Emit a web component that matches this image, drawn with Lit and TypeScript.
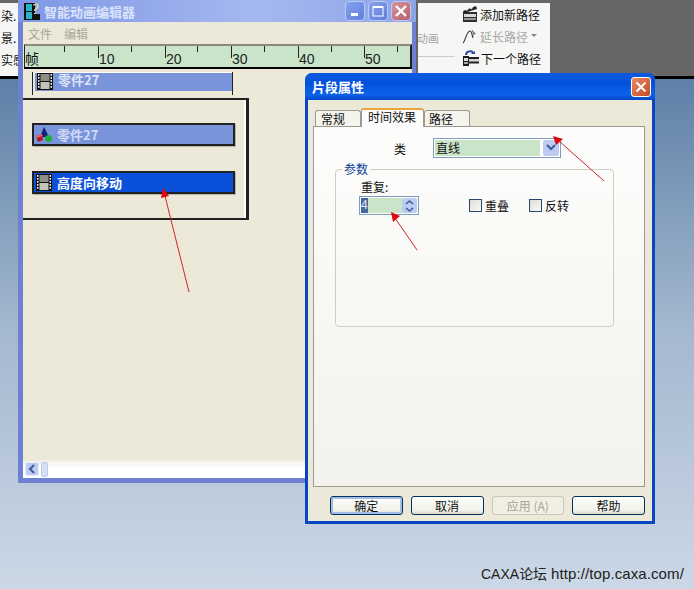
import { LitElement, html, css, svg } from "lit";
import { customElement } from "lit/decorators.js";

const film = html`<svg class="film" width="16" height="17" viewBox="0 0 16 17">
  <rect width="16" height="17" fill="#111"/>
  <rect x="3.5" y="1" width="9" height="7" fill="#8d8d86"/><rect x="3.5" y="9" width="9" height="7" fill="#c4c4bc"/>
  ${[1, 4, 7, 10, 13].map((y) => svg`<rect x="1" y="${y}" width="1.5" height="1.8" fill="#eee"/><rect x="13.5" y="${y}" width="1.5" height="1.8" fill="#eee"/>`)}
</svg>`;

const ticks = [
  { x: 40, h: 6 }, { x: 74, h: 12, l: "10" }, { x: 107, h: 6 }, { x: 141, h: 12, l: "20" }, { x: 173, h: 6 },
  { x: 207, h: 12, l: "30" }, { x: 240, h: 6 }, { x: 274, h: 12, l: "40" }, { x: 307, h: 6 }, { x: 340, h: 12, l: "50" }, { x: 373, h: 6 },
];

@customElement("app-root")
export class AppRoot extends LitElement {
  static styles = css`
    :host { display: block; position: relative; width: 694px; height: 589px; overflow: hidden;
      background: linear-gradient(180deg, #55789f 0%, #5b7ea6 12%, #a3b7ce 55%, #ccd8e6 100%);
      font-family: "Noto Sans CJK SC", "Liberation Sans", sans-serif; font-size: 12px; color: #111; }
    .backdrop { position: absolute; left: 0; top: 0; width: 694px; height: 79px; background: #666; border-bottom: 3px solid #000; box-sizing: border-box; }
    .side { position: absolute; left: 0; top: 3px; width: 18px; height: 73px; background: #f6f6f4; display: flex; flex-direction: column; gap: 4px; padding: 4px 0 0 1px; box-sizing: border-box; line-height: 18px; white-space: nowrap; }
    .tools { position: absolute; left: 418px; top: 3px; width: 132px; height: 73px; background: #f6f6f4; }
    .tools .old { position: absolute; left: -1px; top: 26px; color: #a4a4a4; line-height: 18px; font-size: 11px; white-space: nowrap; }
    .tools .rule { position: absolute; left: 0; top: 53px; width: 37px; height: 1px; background: #ccc; }
    .tl { position: absolute; left: 45px; display: flex; align-items: center; gap: 3px; height: 20px; white-space: nowrap; }
    .tl.dis { color: #a8a8a8; }
    .tl svg { flex: none; }

    .main { position: absolute; left: 18px; top: 0; width: 398px; height: 483px; box-sizing: border-box; display: flex; flex-direction: column; background: #6d80d2; padding: 0 4px 5px 5px; }
    .main .title { height: 22px; margin: 0 -4px 0 -5px; padding: 0 0 0 5px; display: flex; align-items: center; gap: 4px; background: linear-gradient(90deg, #7e97e6, #a6b8f0 60%, #8ea4e6); color: #dbe3fb; font-weight: 700; font-size: 13px; }
    .caps { margin-left: auto; margin-right: 5px; display: flex; gap: 3px; }
    .cap { width: 20px; height: 20px; border: 1px solid #b9c8f4; border-radius: 4px; box-sizing: border-box; background: linear-gradient(135deg, #87a2ee, #5f7fdc); display: flex; align-items: center; justify-content: center; }
    .cap.close { background: linear-gradient(135deg, #d9939a, #b9606c); }
    .body { flex: 1; background: #ece9d8; display: flex; flex-direction: column; min-height: 0; }
    .menu { height: 22px; display: flex; gap: 12px; align-items: center; padding-left: 5px; color: #a9a79b; flex: none; }
    .ruler { flex: none; position: relative; margin-left: 1px; width: 388px; height: 25px; box-sizing: border-box; background: #c9e4c8; border-top: 2px solid #8a8a80; border-bottom: 2px solid #000; border-left: 1px solid #222; border-right: 2px solid #222; }
    .ruler .tick { position: absolute; top: 0; width: 1px; background: #222; }
    .ruler .num { position: absolute; top: 5px; font-family: "Liberation Sans", sans-serif; font-size: 14px; line-height: 16px; color: #222; }
    .ruler .zhen { position: absolute; left: 0; top: 3px; font-size: 14px; line-height: 18px; }
    .tab { flex: none; margin: 3px 0 0 9px; width: 201px; height: 23px; box-sizing: border-box; border-left: 1px solid #222; border-right: 1px solid #222; padding: 0 0 0 2px; background: #ece9d8; }
    .tab > div { height: 18px; border-top: 1px solid #fff; background: #7a94db; display: flex; align-items: flex-start; gap: 5px; padding-left: 2px; color: #dbe3f7; font-weight: 700; font-size: 13px; line-height: 14px; }
    .panel { flex: none; margin-top: 3px; width: 226px; height: 122px; box-sizing: border-box; border-top: 2px solid #222; border-right: 3px solid #222; border-bottom: 2px solid #222; box-shadow: inset -2px 0 #fff; padding: 23px 0 0 9px; display: flex; flex-direction: column; gap: 25px; }
    .row { width: 203px; height: 23px; flex: none; box-sizing: border-box; border: 2px solid #222; box-shadow: 1px 1px #b5b5aa; display: flex; align-items: center; gap: 5px; padding-left: 2px; font-weight: 700; font-size: 13px; background: #7a94db; color: #cfdaf5; }
    .row.sel { background: #0a50d8; color: #fff; }
    .spacer { flex: 1; }
    .scroll { flex: none; height: 18px; background: linear-gradient(180deg, #f1efe4, #fff 45%, #fff); display: flex; align-items: center; gap: 2px; padding-left: 2px; }
    .sbtn { width: 14px; height: 14px; border: 1px solid #e8eefb; border-radius: 2px; background: #bccbef; display: flex; align-items: center; justify-content: center; box-sizing: border-box; }
    .thumb { width: 7px; height: 15px; box-sizing: border-box; border: 1px solid #bcc9ec; border-radius: 2px; background: #d5dff6; }

    .dlg { position: absolute; left: 305px; top: 73px; width: 350px; height: 451px; box-sizing: border-box; display: flex; flex-direction: column; background: #0a45c4; border-radius: 7px 7px 0 0; padding: 0 3px 3px; }
    .dlg .title { flex: none; height: 27px; margin: 0 -3px; padding: 0 4px 0 7px; display: flex; align-items: center; justify-content: space-between; border-radius: 7px 7px 0 0; background: linear-gradient(180deg, #0a5ae0, #0451dc 40%, #0a63ea 80%, #0645c8); color: #fff; font-weight: 700; font-size: 13px; }
    .x { width: 20px; height: 20px; box-sizing: border-box; border: 1px solid #fff; border-radius: 3px; background: linear-gradient(135deg, #e28a68, #c84a26); display: flex; align-items: center; justify-content: center; }
    .dbody { flex: 1; background: #ece9d8; padding: 8px 7px 0 5px; display: flex; flex-direction: column; min-height: 0; }
    .tabs { flex: none; height: 18px; display: flex; align-items: flex-end; padding-left: 2px; position: relative; z-index: 1; }
    .t { box-sizing: border-box; height: 16px; width: 46px; border: 1px solid #9a9a90; border-bottom: 0; border-radius: 3px 3px 0 0; background: #f4f3ec; padding-left: 5px; line-height: 16px; }
    .t.on { height: 19px; width: 63px; background: #fcfcfb; border-top: 2px solid #e8a53c; padding-left: 6px; line-height: 14px; margin-bottom: -1px; border-bottom: 0; }
    .t.last { margin-left: 0; padding-left: 4px; }
    .page { flex: none; height: 361px; box-sizing: border-box; border: 1px solid #9a9a90; background: linear-gradient(180deg, #fdfdfc, #f3f2ec); display: flex; flex-direction: column; }
    .klass { display: flex; align-items: center; margin-top: 10px; padding-left: 80px; gap: 27px; height: 22px; flex: none; }
    .combo { width: 128px; height: 20px; box-sizing: border-box; border: 1px solid #7f9db9; background: #fff; display: flex; padding: 1px; gap: 3px; align-items: stretch; }
    .combo .val { flex: 1; background: #c9e4c8; line-height: 16px; padding-left: 1px; }
    .combo .arr { width: 16px; background: #bccbf2; border-radius: 2px; display: flex; align-items: center; justify-content: center; }
    fieldset { margin: 10px 0 0 21px; width: 279px; height: 158px; box-sizing: border-box; border: 1px solid #cfcdbf; border-radius: 4px; padding: 0 0 0 25px; position: relative; }
    legend { color: #0a3f9a; padding: 0 2px; margin-left: 6px; font-size: 12px; line-height: 12px; position: absolute; top: -7px; left: 0; background: #fbfbf9; }
    .lbl { margin-top: 8px; line-height: 18px; }
    .ctl { display: flex; align-items: center; margin-left: -2px; }
    .spin { width: 60px; height: 19px; box-sizing: border-box; border: 1px solid #7f9db9; display: flex; padding: 1px; }
    .spin .v { flex: 1; background: #c9e4c8; }
    .spin .v span { display: block; width: 7px; height: 15px; background: #44679a; color: #e8eef8; line-height: 15px; font-size: 12px; font-family: "Liberation Sans", sans-serif; }
    .spin .ud { width: 15px; background: #bccbf2; border-radius: 2px; display: flex; align-items: center; justify-content: center; }
    .chk { display: flex; align-items: center; gap: 3px; margin-left: 50px; }
    .chk + .chk { margin-left: 20px; }
    .box { width: 13px; height: 13px; box-sizing: border-box; border: 1px solid #26476e; background: linear-gradient(135deg, #dcdcd3, #fbfbf8); }
    .btns { display: flex; gap: 8px; margin-top: 9px; padding-left: 17px; flex: none; }
    .btn { width: 73px; height: 19px; box-sizing: border-box; border: 1px solid #00305c; border-radius: 3px; background: linear-gradient(180deg, #fff, #f1f0e8 80%, #d9d6c8); text-align: center; line-height: 17px; font-size: 12px; }
    .btn.def { box-shadow: inset 0 0 0 2px #a5bde6; }
    .btn.dis { border-color: #c9c7ba; color: #a5a397; background: #f1efe4; }

    .foot { position: absolute; left: 481px; top: 564px; line-height: 18px; font-family: "Liberation Sans", "Noto Sans CJK SC", sans-serif; font-size: 14px; color: #222; white-space: nowrap; }
    .foot b { font-family: "Noto Sans CJK SC", sans-serif; font-weight: 400; }
    .foot i { font-style: normal; font-size: 15px; letter-spacing: 0.1px; }
    .arrows { position: absolute; left: 0; top: 0; pointer-events: none; }
  `;

  render() {
    return html`
      <div class="backdrop"></div>
      <div class="side"><div>染.</div><div>景.</div><div>实感</div></div>
      <div class="tools">
        <div class="old">动画</div><div class="rule"></div>
        <div class="tl" style="top:1px">
          <svg width="14" height="16" viewBox="0 0 14 16"><rect x="0" y="6" width="14" height="10" fill="#2d2d2d"/><rect x="1" y="8" width="12" height="3" fill="#d8d8d8"/><rect x="1" y="12" width="12" height="2" fill="#9a9a9a"/><path d="M0 5 13 0l1 3-13 4z" fill="#222"/><path d="M3 4.600 5 2.800M7.500 3 9.500 1.200" stroke="#eee" stroke-width="1.400"/></svg>
          <span>添加新路径</span></div>
        <div class="tl dis" style="top:23px">
          <svg width="14" height="16" viewBox="0 0 14 16"><path d="M0 15C2.500 13 3.500 3 7 3c2 0 2 5 3 7" fill="none" stroke="#333" stroke-width="1.100"/><path d="M8.500 1 13 6l-2 .5 0 2.500z" fill="#777"/></svg>
          <span>延长路径</span>
          <svg width="6" height="4" viewBox="0 0 6 4"><path d="M0 0h6L3 3z" fill="#888"/></svg></div>
        <div class="tl" style="top:45px">
          <svg width="16" height="16" viewBox="0 0 16 16"><rect x="0" y="6" width="6" height="10" fill="#1c1c1c"/><rect x="1" y="8" width="4" height="3" fill="#ddd"/><rect x="1" y="12" width="4" height="2" fill="#aaa"/><rect x="6" y="7" width="10" height="2" fill="#222"/><rect x="6" y="9" width="10" height="2.500" fill="#d5d5d0"/><rect x="6" y="11.500" width="10" height="2" fill="#222"/><path d="M3 5C3 1 9 0 10 3" fill="none" stroke="#244a9c" stroke-width="2"/><path d="M8 4h4V1z" fill="#244a9c"/></svg>
          <span style="margin-left:-1px">下一个路径</span></div>
      </div>

      <div class="main">
        <div class="title">
          <svg width="17" height="17" viewBox="0 0 17 17"><rect x="1" y="0" width="11" height="17" fill="#111"/><rect x="3" y="1" width="6" height="7" fill="#27b3c6"/><rect x="3" y="9" width="6" height="7" fill="#27b3c6"/><path d="M10 2c2-2 6-2 6 1s-3 3-3 5h-2c0-3 3-3 3-5s-2-1-3 0zM11 10h2v2h-2z" fill="#d8d8a0"/><path d="M9 11h8v6H9z" fill="#111"/></svg>
          <span>智能动画编辑器</span>
          <div class="caps">
            <div class="cap"><svg width="12" height="12"><rect x="2" y="8" width="7" height="3" fill="#fff"/></svg></div>
            <div class="cap"><svg width="12" height="12"><rect x="1" y="2" width="10" height="9" fill="none" stroke="#fff"/><rect x="1" y="1" width="10" height="2" fill="#fff"/></svg></div>
            <div class="cap close"><svg width="14" height="14"><path d="M2 2 12 12M12 2 2 12" stroke="#fff" stroke-width="2.400"/></svg></div>
          </div>
        </div>
        <div class="body">
          <div class="menu"><span>文件</span><span>编辑</span></div>
          <div class="ruler">
            <div class="zhen">帧</div>
            ${ticks.map((t) => html`<div class="tick" style="left:${t.x - 1}px;height:${t.h}px"></div>${t.l ? html`<div class="num" style="left:${t.x}px">${t.l}</div>` : ""}`)}
          </div>
          <div class="tab"><div>${film}<span>零件27</span></div></div>
          <div class="panel">
            <div class="row">
              <svg width="16" height="16" viewBox="0 0 16 16"><path d="M8 0 13 10H4z" fill="#12207a"/><path d="M0 9l6-2 1 6-5 2z" fill="#b0171d"/><path d="M0 9l6-2 .5 2-5.500 2z" fill="#e8606a"/><circle cx="12.500" cy="11.500" r="3.500" fill="#22b03a"/></svg>
              <span>零件27</span></div>
            <div class="row sel">${film}<span>高度向移动</span></div>
          </div>
          <div class="spacer"></div>
          <div class="scroll">
            <div class="sbtn"><svg width="8" height="10"><path d="M6 1 2 5l4 4" fill="none" stroke="#3d5b96" stroke-width="2"/></svg></div>
            <div class="thumb"></div>
          </div>
        </div>
      </div>

      <div class="dlg">
        <div class="title"><span>片段属性</span>
          <div class="x"><svg width="12" height="12"><path d="M1.500 1.500 10.500 10.500M10.500 1.500 1.500 10.500" stroke="#fff" stroke-width="2"/></svg></div></div>
        <div class="dbody">
          <div class="tabs"><div class="t">常规</div><div class="t on">时间效果</div><div class="t last">路径</div></div>
          <div class="page">
            <div class="klass"><span>类</span>
              <div class="combo"><div class="val">直线</div><div class="arr"><svg width="10" height="8"><path d="M1 1l4 4 4-4" fill="none" stroke="#3d5b96" stroke-width="2"/></svg></div></div></div>
            <fieldset><legend>参数</legend>
              <div class="lbl">重复:</div>
              <div class="ctl">
                <div class="spin"><div class="v"><span>4</span></div><div class="ud"><svg width="9" height="14"><path d="M1 5l3.500-3L8 5M1 9l3.500 3L8 9" fill="none" stroke="#3d5b96" stroke-width="1.600"/></svg></div></div>
                <div class="chk"><div class="box"></div><span>重叠</span></div>
                <div class="chk"><div class="box"></div><span>反转</span></div>
              </div>
            </fieldset>
          </div>
          <div class="btns">
            <div class="btn def">确定</div><div class="btn">取消</div><div class="btn dis">应用 (A)</div><div class="btn">帮助</div>
          </div>
        </div>
      </div>

      <div class="foot">CAXA<b>论坛</b> <i>http://top.caxa.com/</i></div>

      <svg class="arrows" width="694" height="589" viewBox="0 0 694 589">
        <g stroke="#c8262a" stroke-width="1" fill="none"><path d="M189 292 165 196M604 181 559 141M417 250 395 218"/></g>
        <g fill="#e0060c"><path d="M163 188 169 196 161 198z"/><path d="M553 136 563 139 556 145z"/><path d="M391 212 400 216 393 222z"/></g>
      </svg>
    `;
  }
}
